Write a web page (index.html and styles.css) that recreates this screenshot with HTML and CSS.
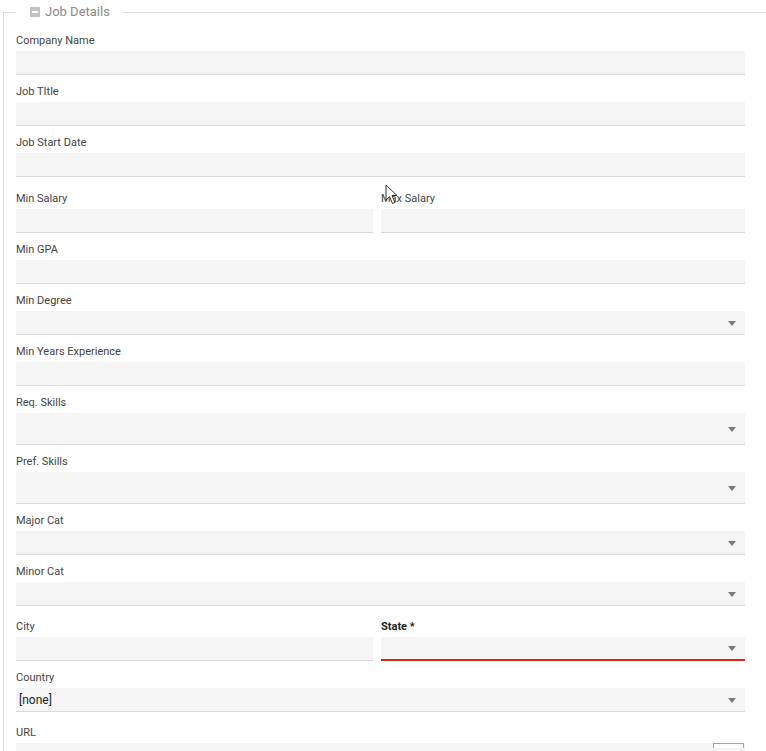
FILE: index.html
```html
<!DOCTYPE html>
<html>
<head>
<meta charset="utf-8">
<link rel="stylesheet" href="styles.css">
</head>
<body>
<fieldset class="panel">
  <legend class="panel-legend"><span class="collapse-icon"></span>Job Details</legend>
  <div class="field first">
    <label class="lbl">Company Name</label>
    <div class="inp"></div>
  </div>
  <div class="field">
    <label class="lbl">Job TItle</label>
    <div class="inp"></div>
  </div>
  <div class="field">
    <label class="lbl">Job Start Date</label>
    <div class="inp"></div>
  </div>
  <div class="pair pair-a">
    <div class="field">
      <label class="lbl">Min Salary</label>
      <div class="inp"></div>
    </div>
    <div class="field">
      <label class="lbl">Max Salary</label>
      <div class="inp"></div>
    </div>
  </div>
  <div class="field">
    <label class="lbl">Min GPA</label>
    <div class="inp"></div>
  </div>
  <div class="field">
    <label class="lbl">Min Degree</label>
    <div class="inp sel"><span class="caret"></span></div>
  </div>
  <div class="field">
    <label class="lbl">Min Years Experience</label>
    <div class="inp"></div>
  </div>
  <div class="field">
    <label class="lbl">Req. Skills</label>
    <div class="inp sel tall"><span class="caret"></span></div>
  </div>
  <div class="field">
    <label class="lbl">Pref. Skills</label>
    <div class="inp sel tall"><span class="caret"></span></div>
  </div>
  <div class="field">
    <label class="lbl">Major Cat</label>
    <div class="inp sel"><span class="caret"></span></div>
  </div>
  <div class="field">
    <label class="lbl">Minor Cat</label>
    <div class="inp sel"><span class="caret"></span></div>
  </div>
  <div class="pair pair-b">
    <div class="field">
      <label class="lbl">City</label>
      <div class="inp"></div>
    </div>
    <div class="field">
      <label class="lbl req">State *</label>
      <div class="inp sel invalid"><span class="caret"></span></div>
    </div>
  </div>
  <div class="field">
    <label class="lbl">Country</label>
    <div class="inp sel value"><span class="val">[none]</span><span class="caret"></span></div>
  </div>
  <div class="field url">
    <label class="lbl">URL</label>
    <div class="inp url-inp"><span class="btn-edge"></span></div>
  </div>
</fieldset>
<svg class="cursor" width="14" height="22" viewBox="0 0 14 22">
  <path d="M1 1 L1 16 L4.5 12.5 L7.5 19.5 L10 18.5 L7 11.5 L12 11.5 Z" fill="#fff" stroke="#333" stroke-width="1"/>
</svg>
</body>
</html>
```
FILE: styles.css
```css
html, body {
  margin: 0;
  padding: 0;
  background: #fff;
  overflow: hidden;
}
body {
  font-family: Roboto, "Liberation Sans", sans-serif;
  width: 766px;
  height: 751px;
  position: relative;
}
.panel {
  margin: 3px 0 0 3px;
  width: 763px;
  border: 1px solid #dedede;
  border-right: none;
  padding: 0 0 0 12px;
  box-sizing: border-box;
  min-width: 0;
}
.panel-legend {
  padding: 0 12px 0 14px;
  margin: 0;
  font-size: 13px;
  line-height: 18px;
  color: #8a8a8a;
  display: flex;
  align-items: center;
}
.collapse-icon {
  width: 10px;
  height: 10px;
  background: #c2c2c2;
  border-radius: 1px;
  margin-right: 5px;
  position: relative;
}
.collapse-icon::after {
  content: "";
  position: absolute;
  left: 2px;
  right: 2px;
  top: 4px;
  height: 2px;
  background: #fff;
}
.field {
  width: 729px;
  margin-top: 10px;
}
.field.first {
  margin-top: 13px;
}
.pair {
  display: grid;
  grid-template-columns: 357px 364px;
  column-gap: 8px;
  width: 729px;
}
.pair .field {
  width: auto;
}
.pair-a {
  margin-top: 5px;
}
.pair-b {
  margin-top: 4px;
}
.url {
  margin-top: 14px;
}
.lbl {
  display: block;
  font-size: 11px;
  line-height: 14px;
  color: #444;
  margin-bottom: 3px;
}
.lbl.req {
  font-weight: bold;
  color: #222;
}
.inp {
  height: 23px;
  background: #f5f5f5;
  border-bottom: 1px solid #dadada;
  position: relative;
  display: flex;
  align-items: center;
}
.inp.tall {
  height: 31px;
}
.inp.invalid {
  border-bottom: 2px solid #d9261c;
  height: 22px;
}
.caret {
  position: absolute;
  right: 9px;
  top: 50%;
  margin-top: -2px;
  width: 0;
  height: 0;
  border-left: 4px solid transparent;
  border-right: 4px solid transparent;
  border-top: 5px solid #7a7a7a;
}
.val {
  font-size: 12px;
  color: #222;
  padding-left: 3px;
}
.url-inp {
  border-bottom: none;
}
.btn-edge {
  position: absolute;
  left: 697px;
  top: 0;
  width: 31px;
  height: 5px;
  border: 1px solid #5bb8ea;
  border-bottom: none;
  background: #fff;
  box-sizing: border-box;
}
.cursor {
  position: absolute;
  left: 385px;
  top: 184px;
}
```
